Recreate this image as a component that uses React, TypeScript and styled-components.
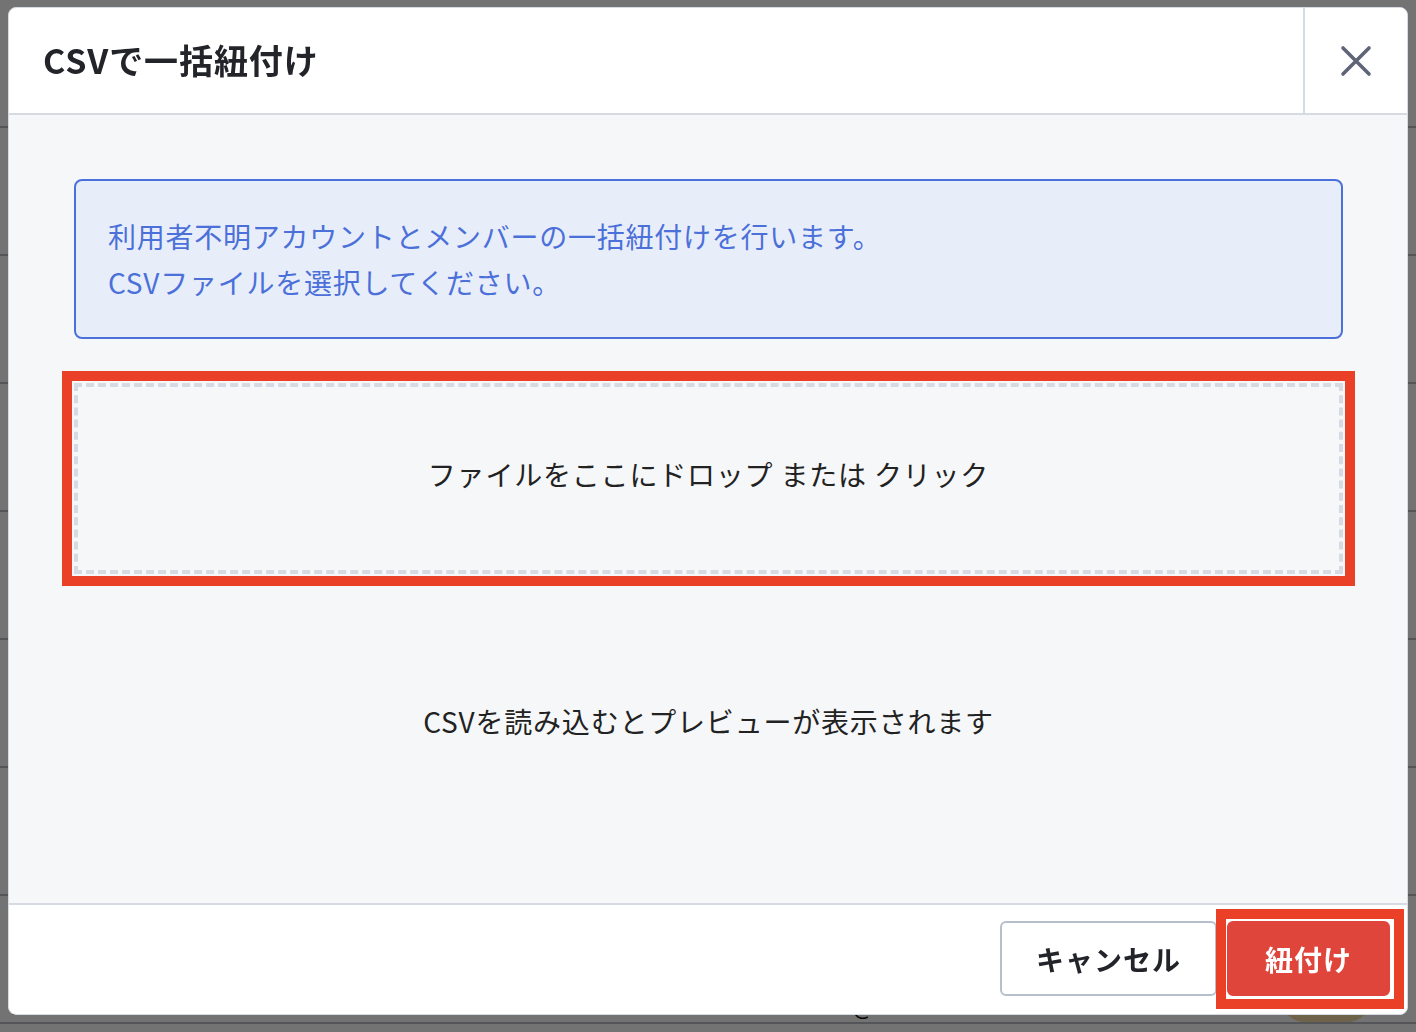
import React from "react";
import styled, { createGlobalStyle } from "styled-components";

const GlobalStyle = createGlobalStyle`
  html, body {
    margin: 0;
    padding: 0;
    width: 100%;
    height: 100%;
    overflow: hidden;
  }
  body {
    font-family: "Noto Sans CJK JP", "Noto Sans", sans-serif;
    color: #222;
    background: #fff;
  }
  * { box-sizing: border-box; }
`;

/* page behind the dialog */
const Page = styled.div`
  width: 1416px;
  height: 1032px;
  background: #fff;
  display: flex;
  flex-direction: column;
`;

const PageRow = styled.div`
  height: 128px;
  flex: none;
  display: grid;
  grid-template-columns: 330px 380px 560px 1fr;
  align-items: end;
  padding: 0 0 0 12px;
  border-bottom: 2px solid #b9bdc6;
  font-size: 24px;
  color: #111;
`;

const Badge = styled.span`
  display: inline-block;
  padding: 6px 22px;
  border-radius: 24px;
  background: #f3d9a4;
  color: #a3701c;
  font-size: 22px;
`;

const Overlay = styled.div`
  position: fixed;
  inset: 0;
  background: rgba(0, 0, 0, 0.55);
`;

const Modal = styled.div`
  position: absolute;
  left: 8px;
  top: 7px;
  width: 1400px;
  height: 1008px;
  background: #fff;
  border: 1px solid #d6dae3;
  border-radius: 8px;
  overflow: hidden;
  display: flex;
  flex-direction: column;
`;

const Header = styled.div`
  height: 107px;
  flex: none;
  display: flex;
  align-items: stretch;
  border-bottom: 2px solid #d6dae3;
`;

const Title = styled.h2`
  flex: 1;
  margin: 0;
  padding: 0 0 2px 34px;
  display: flex;
  align-items: center;
  font-size: 34px;
  font-weight: 700;
  letter-spacing: 0.9px;
  color: #222429;
`;

const CloseButton = styled.button`
  width: 104px;
  border: none;
  border-left: 2px solid #d6dae3;
  background: #fff;
  display: flex;
  align-items: center;
  justify-content: center;
  padding: 0;
  cursor: pointer;
`;

const Body = styled.div`
  flex: 1;
  background: #f6f7f9;
  padding: 64px 64px 0 65px;
  display: flex;
  flex-direction: column;
`;

const InfoBox = styled.div`
  border: 2px solid #4c70d9;
  border-radius: 8px;
  background: #e8eef9;
  padding: 32px 32px 32px;
  color: #4c70d9;
  font-size: 28px;
  line-height: 46px;
  letter-spacing: 0.75px;
`;

const DropZone = styled.div`
  margin-top: 44px;
  height: 191px;
  padding-bottom: 10px;
  border: 4px dashed #d6dae3;
  display: flex;
  align-items: center;
  justify-content: center;
  font-size: 28px;
  color: #222;
  letter-spacing: 0.8px;
  cursor: pointer;
  outline: 10px solid #ea4027;
  outline-offset: 2px;
`;

const PreviewNote = styled.p`
  margin: 124px 0 0;
  text-align: center;
  font-size: 28px;
  line-height: 46px;
  color: #222;
  letter-spacing: 0.8px;
`;

const Footer = styled.div`
  height: 111px;
  flex: none;
  border-top: 2px solid #d6dae3;
  display: flex;
  justify-content: flex-end;
  align-items: flex-start;
  gap: 10px;
  padding: 16px 17px 0 0;
`;

const Button = styled.button<{ $primary?: boolean }>`
  position: relative;
  height: 75px;
  padding: 0 ${(p) => (p.$primary ? 36 : 34)}px;
  border-radius: 6px;
  font-family: "Noto Sans CJK JP", "Noto Sans", sans-serif;
  font-size: 28px;
  font-weight: 700;
  letter-spacing: 1px;
  cursor: pointer;
  border: 2px solid ${(p) => (p.$primary ? "#e0453c" : "#b8bfcc")};
  background: ${(p) => (p.$primary ? "#e0453c" : "#fff")};
  color: ${(p) => (p.$primary ? "#fff" : "#222429")};
`;

/* red highlight frame drawn over the submit button */
const Highlight = styled.span`
  position: absolute;
  top: -14px;
  right: -16px;
  bottom: -15px;
  left: -13px;
  border: 10px solid #ea4027;
  pointer-events: none;
`;

function CloseIcon() {
  return (
    <svg width="32" height="32" viewBox="0 0 32 32" fill="none">
      <path
        d="M3 3 L29 29 M29 3 L3 29"
        stroke="#5f6577"
        strokeWidth="3.6"
        strokeLinecap="round"
      />
    </svg>
  );
}

const rows = ["ー", "は", "カ", "表", "・", "0", "0"];

export default function App() {
  return (
    <>
      <GlobalStyle />
      <Page>
        {rows.map((r, i) => (
          <PageRow key={i}>
            <span>{r}</span>
            <span />
            <span />
            <span />
          </PageRow>
        ))}
        <PageRow>
          <span>zooba.ai</span>
          <span>zooba.ai</span>
          <span>atsushi.ono@zooba.ai</span>
          <span>
            <Badge>有料</Badge>
          </span>
        </PageRow>
      </Page>

      <Overlay>
        <Modal>
          <Header>
            <Title>CSVで一括紐付け</Title>
            <CloseButton aria-label="閉じる">
              <CloseIcon />
            </CloseButton>
          </Header>

          <Body>
            <InfoBox>
              利用者不明アカウントとメンバーの一括紐付けを行います。
              <br />
              CSVファイルを選択してください。
            </InfoBox>

            <DropZone>ファイルをここにドロップ または クリック</DropZone>

            <PreviewNote>CSVを読み込むとプレビューが表示されます</PreviewNote>
          </Body>

          <Footer>
            <Button>キャンセル</Button>
            <Button $primary>
              紐付け
              <Highlight />
            </Button>
          </Footer>
        </Modal>
      </Overlay>
    </>
  );
}
